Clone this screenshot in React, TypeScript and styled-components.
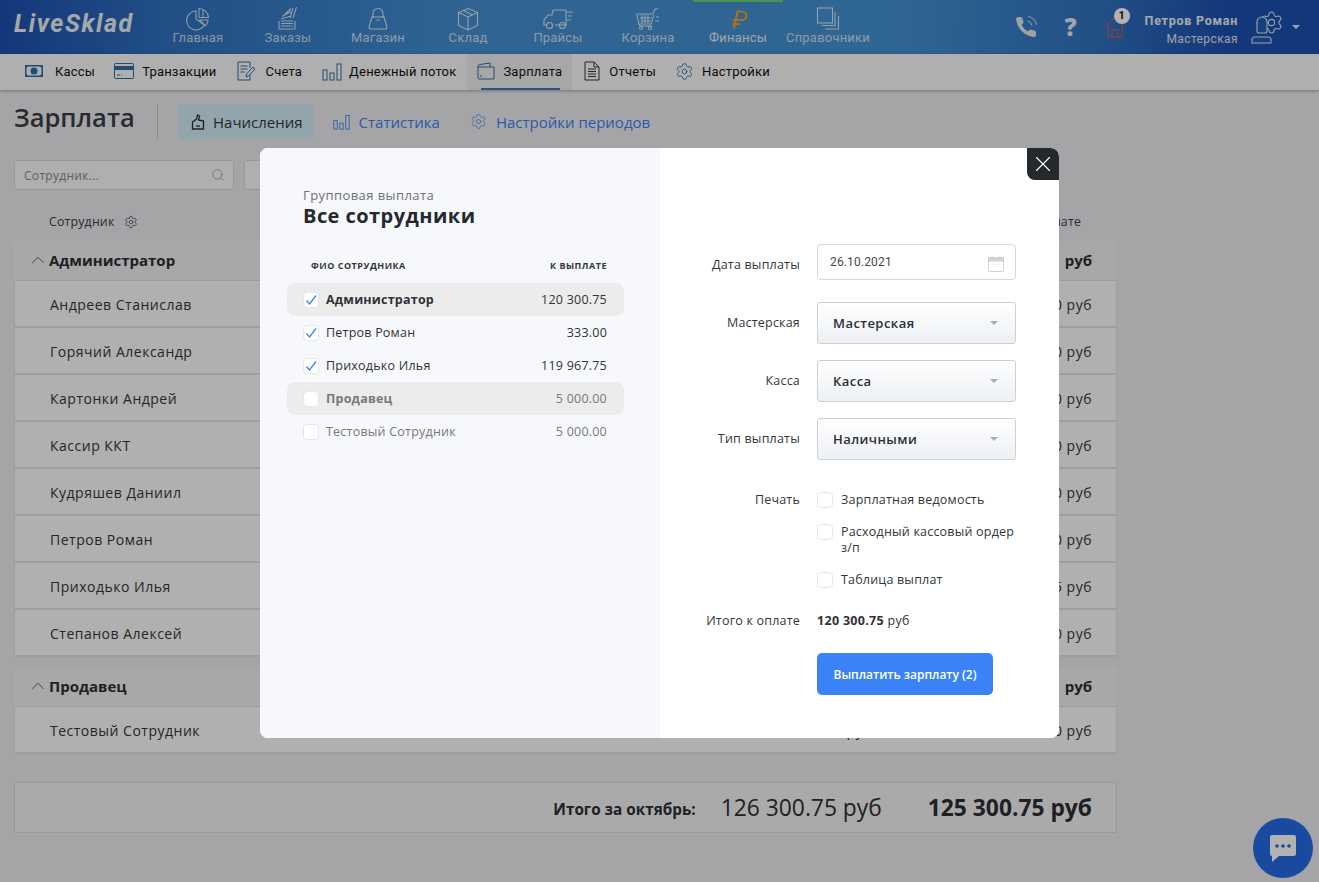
import styled, { createGlobalStyle } from 'styled-components';
import { ChevronUp, Search, Settings, X } from 'lucide-react';

const GlobalStyle = createGlobalStyle`
  html, body {
    margin: 0;
    height: 100%;
    overflow: hidden;
    background: #ecedf0;
    font-family: "Open Sans", "Liberation Sans", sans-serif;
    color: #2b2f33;
  }
  * { box-sizing: border-box; }
`;

const Page = styled.div`
  position: relative;
  width: 1319px;
  height: 882px;
  overflow: hidden;
`;

/* top bar */
const Header = styled.header`
  height: 54px;
  display: flex;
  align-items: stretch;
  background: linear-gradient(92deg, #1c50b0 0%, #2f70bf 12%, #4490d2 35%, #4592d2 68%, #2f70bf 84%, #1c50b0 93%);
`;

const Logo = styled.div`
  width: 153px;
  padding: 9px 0 0 14px;
  font-family: Roboto, sans-serif;
  font-style: italic;
  font-weight: 700;
  font-size: 25px;
  letter-spacing: 1.55px;
  color: #eef0f2;
`;

const MainNav = styled.nav`
  display: flex;
`;

const NavItem = styled.div<{ $active?: boolean }>`
  position: relative;
  width: 90px;
  display: flex;
  flex-direction: column;
  align-items: center;
  padding-top: 7px;
  font-family: Roboto, sans-serif;
  font-size: 13px;
  letter-spacing: 0.2px;
  color: ${(p) => (p.$active ? '#e6edf3' : 'rgba(255,255,255,0.72)')};

  svg {
    height: 24px;
    margin-bottom: -1px;
    color: rgba(255, 255, 255, 0.78);
  }

  &::before {
    content: '';
    display: ${(p) => (p.$active ? 'block' : 'none')};
    position: absolute;
    top: 0;
    left: 0;
    width: 100%;
    height: 2px;
    background: #6fce7a;
  }
`;

const HeaderRight = styled.div`
  margin-left: auto;
  display: flex;
  align-items: center;
  padding-right: 19px;
  color: #e3e7ec;
`;

const IconSlot = styled.div<{ $w: number }>`
  position: relative;
  width: ${(p) => p.$w}px;
  display: flex;
  justify-content: center;
`;

const Question = styled.span`
  font-family: "Open Sans", sans-serif;
  font-weight: 800;
  font-size: 24px;
  line-height: 26px;
  color: #e9ecef;
`;

const Badge = styled.span`
  position: absolute;
  top: -8px;
  left: 18px;
  width: 16px;
  height: 16px;
  border-radius: 50%;
  background: #fff;
  color: #111;
  font-family: Roboto, sans-serif;
  font-weight: 700;
  font-size: 11px;
  line-height: 16px;
  text-align: center;
`;

const UserInfo = styled.div`
  margin: 0 12px 0 10px;
  padding-top: 5px;
  text-align: right;
  font-family: Roboto, sans-serif;
  line-height: 18px;
`;

const UserName = styled.div`
  font-weight: 700;
  font-size: 12.5px;
  letter-spacing: 0.75px;
  color: #f0f2f5;
`;

const UserPlace = styled.div`
  font-size: 12px;
  letter-spacing: 0.4px;
  color: #e0e6ec;
`;

const Caret = styled.span`
  margin-left: 8px;
  width: 0;
  height: 0;
  border-left: 4px solid transparent;
  border-right: 4px solid transparent;
  border-top: 4px solid #e9ecef;
`;

/* second bar */
const SubNav = styled.nav`
  height: 36px;
  display: flex;
  padding-left: 15px;
  background: #fbfbfb;
  box-shadow: 0 1px 3px rgba(0, 0, 0, 0.3);
`;

const SubItem = styled.div<{ $active?: boolean; $gap?: number; $pr?: number }>`
  position: relative;
  display: flex;
  align-items: center;
  gap: ${(p) => p.$gap ?? 9}px;
  padding: 0 ${(p) => p.$pr ?? 10}px 2px 10px;
  margin: ${(p) => (p.$active ? '0 2px 0 1px' : '0')};
  background: ${(p) => (p.$active ? '#f0f0f0' : 'transparent')};
  font-family: Roboto, sans-serif;
  font-size: 13px;
  letter-spacing: 0.2px;
  color: #111;

  svg {
    color: #2f6ea8;
    flex: none;
  }

  &::after {
    content: '';
    display: ${(p) => (p.$active ? 'block' : 'none')};
    position: absolute;
    left: 14px;
    right: 12px;
    bottom: 0;
    height: 2px;
    background: #3a7dba;
  }
`;

/* page body */
const Main = styled.main`
  padding: 14px 202px 0 14px;
`;

const TitleRow = styled.div`
  display: flex;
  align-items: center;
  height: 35px;
`;

const Title = styled.h1`
  margin: 0;
  width: 144px;
  height: 35px;
  font-size: 25.5px;
  line-height: 27px;
  font-weight: 600;
  color: #3a3e42;
  border-right: 1px solid #c5c5c8;
`;

const PageTab = styled.div<{ $active?: boolean }>`
  height: 35px;
  margin-left: ${(p) => (p.$active ? '20px' : '0')};
  margin-right: ${(p) => (p.$active ? '6px' : '2px')};
  display: flex;
  align-items: center;
  gap: ${(p) => (p.$active ? '8px' : '9px')};
  padding: ${(p) => (p.$active ? '0 10px 0 13px' : '0 14px')};
  border-radius: 3px;
  font-size: 15px;
  background: ${(p) => (p.$active ? '#d1ecf7' : 'transparent')};
  color: ${(p) => (p.$active ? '#33383c' : '#3b82f6')};
`;

const Filters = styled.div`
  display: flex;
  gap: 10px;
  margin-top: 21px;
`;

const FilterBox = styled.div`
  width: 220px;
  height: 30px;
  padding: 0 8px 0 9px;
  display: flex;
  align-items: center;
  justify-content: space-between;
  background: #fbfbfb;
  border: 1px solid #d8d8d8;
  border-radius: 3px;
  font-size: 12px;
  letter-spacing: 0.3px;
  color: #8a8a8a;
`;

const ColumnHead = styled.div`
  height: 51px;
  padding: 0 36px 11px 35px;
  display: flex;
  align-items: flex-end;
  justify-content: space-between;
  font-size: 12.3px;
  letter-spacing: 0.2px;
  color: #3a3e42;
`;

const ColumnName = styled.span`
  display: flex;
  align-items: center;
  gap: 10px;
`;

const GroupHead = styled.div<{ $spaced?: boolean }>`
  height: 40px;
  margin-top: ${(p) => (p.$spaced ? '10px' : '0')};
  padding: 0 25px 2px 13px;
  display: flex;
  align-items: center;
  justify-content: space-between;
  background: #f1f1f1;
  border-bottom: 1px solid #e0e0e0;
  font-size: 15px;
  font-weight: 700;
  color: #2b2f33;
`;

const GroupName = styled.span`
  display: flex;
  align-items: center;
`;

const GroupSum = styled.span`
  word-spacing: 6px;
`;

const Row = styled.div`
  height: 47px;
  padding: 2px 24px 0 35px;
  display: grid;
  grid-template-columns: 1fr 200px 220px;
  align-items: center;
  background: #fcfcfc;
  border: 1px solid #e2e2e2;
  border-width: 0 1px 2px 1px;
  font-size: 14px;
  letter-spacing: 0.5px;
  color: #33373b;
`;

const Amount = styled.span`
  text-align: right;
`;

const TotalBar = styled.div`
  height: 51px;
  margin-top: 28px;
  padding: 0 24px 0 0;
  display: flex;
  align-items: center;
  justify-content: flex-end;
  background: #f4f4f4;
  border: 1px solid #dcdcdc;
  color: #2b2f33;
`;

const TotalLabel = styled.span`
  margin-right: 25px;
  padding-top: 3px;
  font-size: 15.3px;
  font-weight: 700;
`;

const TotalValue = styled.span<{ $bold?: boolean }>`
  margin-left: ${(p) => (p.$bold ? '46px' : '0')};
  font-size: 22.8px;
  font-weight: ${(p) => (p.$bold ? 700 : 400)};
`;

const ChatButton = styled.div`
  position: absolute;
  right: 6px;
  bottom: 4px;
  width: 60px;
  height: 60px;
  border-radius: 50%;
  background: #256ae6;
  display: flex;
  align-items: center;
  justify-content: center;
`;

/* modal */
const Overlay = styled.div`
  position: absolute;
  inset: 0;
  padding-top: 148px;
  display: flex;
  justify-content: center;
  align-items: flex-start;
  background: rgba(0, 0, 0, 0.3);
`;

const Modal = styled.div`
  position: relative;
  width: 799px;
  height: 590px;
  display: flex;
  border-radius: 8px;
  overflow: hidden;
  background: #fff;
`;

const CloseButton = styled.div`
  position: absolute;
  top: 0;
  right: 0;
  width: 32px;
  height: 32px;
  display: flex;
  align-items: center;
  justify-content: center;
  background: #24292d;
  border-radius: 0 8px 0 8px;
  color: #fff;
`;

const LeftPane = styled.section`
  width: 400px;
  padding: 39px 36px 0 27px;
  background: #f7f8fb;
`;

const Eyebrow = styled.div`
  margin-left: 16px;
  font-size: 13px;
  line-height: 16px;
  letter-spacing: 0.42px;
  color: #6d7175;
`;

const ModalTitle = styled.h2`
  margin: 0 0 0 16px;
  font-size: 20px;
  line-height: 26px;
  font-weight: 700;
  letter-spacing: 0.45px;
  color: #24292d;
`;

const ListHead = styled.div`
  margin: 29px 0 9px;
  padding: 0 17px 0 24px;
  display: flex;
  justify-content: space-between;
  font-size: 9px;
  line-height: 16px;
  font-weight: 700;
  letter-spacing: 0.5px;
  color: #33373b;
`;

const ListRow = styled.div<{ $group?: boolean; $muted?: boolean }>`
  height: 33px;
  padding: 0 17px 0 16px;
  display: flex;
  align-items: center;
  gap: 7px;
  border-radius: 8px;
  font-size: 12.5px;
  letter-spacing: 0.22px;
  font-weight: ${(p) => (p.$group ? 700 : 400)};
  background: ${(p) => (p.$group ? '#ececec' : 'transparent')};
  color: ${(p) => (p.$muted ? '#77797c' : '#2f3337')};
`;

const ListAmount = styled.span`
  margin-left: auto;
  font-weight: 400;
`;

const Check = styled.span`
  flex: none;
  width: 16px;
  height: 16px;
  display: flex;
  align-items: center;
  justify-content: center;
  background: #fff;
  border: 1px solid #e4e6e9;
  border-radius: 4px;
`;

const RightPane = styled.section`
  flex: 1;
  padding: 96px 0 0 0;
  display: grid;
  grid-template-columns: 140px 199px;
  column-gap: 17px;
  grid-auto-rows: min-content;
  align-items: center;
`;

const Label = styled.label`
  text-align: right;
  font-size: 12.5px;
  line-height: 16px;
  letter-spacing: 0.2px;
  color: #33373b;
`;

const DateField = styled.div`
  height: 36px;
  padding: 0 11px 1px 12px;
  display: flex;
  align-items: center;
  justify-content: space-between;
  border: 1px solid #d5d7da;
  border-radius: 4px;
  font-family: Roboto, sans-serif;
  font-size: 12px;
  letter-spacing: 0.15px;
  color: #454a50;

  svg {
    margin-top: 5px;
  }
`;

const DateLabelCell = styled(Label)`
  padding-top: 6px;
`;

const Select = styled.div`
  height: 42px;
  margin-top: 16px;
  padding: 0 17px 0 15px;
  display: flex;
  align-items: center;
  justify-content: space-between;
  background: linear-gradient(#ffffff, #edf0f4);
  border: 1px solid #ced0d3;
  border-radius: 3px;
  font-size: 13px;
  font-weight: 600;
  letter-spacing: 0.45px;
  color: #2b2f33;

  &::after {
    content: '';
    border-left: 4px solid transparent;
    border-right: 4px solid transparent;
    border-top: 4px solid #a9adb1;
  }
`;

const SelectFirst = styled(Select)`
  margin-top: 22px;
`;

const SelectLabel = styled(Label)<{ $first?: boolean }>`
  margin-top: ${(p) => (p.$first ? '22px' : '16px')};
`;

const PrintLabel = styled(Label)`
  align-self: start;
  margin-top: 32px;
`;

const PrintList = styled.div`
  margin-top: 32px;
  display: flex;
  flex-direction: column;
  gap: 16px;
`;

const PrintItem = styled.div`
  display: flex;
  gap: 8px;
  font-size: 12.5px;
  line-height: 16px;
  letter-spacing: 0.2px;
  color: #33373b;
`;

const PayLabel = styled(Label)`
  margin-top: 25px;
`;

const PayValue = styled.div`
  margin-top: 25px;
  font-size: 12.5px;
  line-height: 16px;
  letter-spacing: 0.3px;
  color: #2f3337;

  b {
    font-weight: 700;
  }
`;

const PayButton = styled.button`
  grid-column: 2;
  width: 176px;
  height: 42px;
  margin-top: 24px;
  border: none;
  border-radius: 5px;
  background: #3b82f6;
  color: #fff;
  font-family: "Open Sans", sans-serif;
  font-size: 12px;
  font-weight: 600;
`;

const ico = { fill: 'none', stroke: 'currentColor', strokeWidth: 1.1 };

const PieIcon = () => (
  <svg width="24" height="24" viewBox="0 0 24 24" {...ico}>
    <path d="M10 4a9.500 9.500 0 1 0 8.500 14L10 12z" />
    <path d="M13 1.500v9h9.500a9.500 9.500 0 0 0-9.500-9z" />
    <path d="M14 13h8a10 10 0 0 1-2.500 6z" />
    <path d="M17 3l0 7" />
  </svg>
);

const OrdersIcon = () => (
  <svg width="24" height="24" viewBox="0 0 24 24" {...ico}>
    <path d="M3 14v8h16v-8" />
    <path d="M5 14h12M5 16.500h12M5 19h12" />
    <path d="M5 12l10-3M6 9.500l9-5M9 7l6-5.500M14 11l3-10M17 11l3.500-11" />
  </svg>
);

const BagIcon = () => (
  <svg width="24" height="24" viewBox="0 0 24 24" {...ico}>
    <path d="M6 10h12l3 10a2 2 0 0 1-2 2H5a2 2 0 0 1-2-2z" />
    <path d="M7 11V6.500a5 5 0 0 1 10 0V11" />
    <path d="M10.500 13h3" />
  </svg>
);

const BoxIcon = () => (
  <svg width="24" height="24" viewBox="0 0 24 24" {...ico}>
    <path d="M12 1.500l9.500 4v13L12 23l-9.500-4.500v-13z" />
    <path d="M2.500 5.500L12 10l9.500-4.500M12 10v13M7.500 3.500l9.500 4.500" />
  </svg>
);

const TruckIcon = () => (
  <svg width="32" height="24" viewBox="0 0 32 24" {...ico}>
    <path d="M11 3h13v15H13" />
    <path d="M11 3l-1 5H6l-4 5v5h2" />
    <circle cx="7.500" cy="18.500" r="3" />
    <circle cx="20.500" cy="18.500" r="3" />
    <path d="M24 18h-.5M25 5h6M26 9h4M25 13h4" />
  </svg>
);

const CartIcon = () => (
  <svg width="26" height="24" viewBox="0 0 26 24" {...ico}>
    <path d="M1 7h17l2-5h3" />
    <path d="M2 8l2 9h12l3-9" />
    <path d="M5 11h12M6 14h10M7 8v8M10 8v8M13 8v8" />
    <path d="M4 17l1 2h12" />
    <circle cx="6" cy="21" r="1.500" />
    <circle cx="15" cy="21" r="1.500" />
    <path d="M21 10h3M20 14h4" />
  </svg>
);

const RubleIcon = () => (
  <svg width="24" height="24" viewBox="0 0 24 24" fill="none" stroke="#f0a526" strokeWidth="2.200">
    <path d="M8 21L11.500 4.500H16a4 4 0 0 1 0 8.500H7" />
    <path d="M6.500 17H14" />
  </svg>
);

const StackIcon = () => (
  <svg width="24" height="24" viewBox="0 0 24 24" {...ico}>
    <rect x="1.500" y="1" width="15" height="15" />
    <path d="M19 5.500V18.500H6M22.500 9v13H9.500" />
  </svg>
);

const PhoneIcon = () => (
  <svg width="24" height="24" viewBox="0 0 24 24" fill="currentColor">
    <path d="M22 18.500v1.500a2 2 0 0 1-2.180 2 19.790 19.790 0 0 1-8.630-3.070 19.500 19.500 0 0 1-6-6 19.790 19.790 0 0 1-3.070-8.670A2 2 0 0 1 4.110 2h2.500a2 2 0 0 1 2 1.720c.13.960.36 1.900.7 2.810a2 2 0 0 1-.45 2.110L7.600 9.900a14 14 0 0 0 6.500 6.500l1.270-1.270a2 2 0 0 1 2.110-.45c.91.340 1.850.570 2.810.700A2 2 0 0 1 22 17z" />
    <path d="M13.500 6a5.500 5.500 0 0 1 4.500 4.500M14 1.500a10 10 0 0 1 8.500 8.500" fill="none" stroke="currentColor" strokeWidth="1" />
  </svg>
);

const HouseIcon = () => (
  <svg width="20" height="22" viewBox="0 0 20 22" fill="none" stroke="#e2564a" strokeWidth="1">
    <path d="M0.500 9.500L10 1l9.500 8.500" />
    <path d="M3 8v13h14V8" />
    <path d="M7 21v-7h6v7" />
  </svg>
);

const UserGearIcon = () => (
  <svg width="34" height="34" viewBox="0 0 34 34" fill="none" stroke="currentColor" strokeWidth="1.100">
    <Settings x="9" y="0" width="25" height="25" strokeWidth="1" />
    <circle cx="12" cy="12" r="5" fill="#1f5bb8" />
    <path d="M7 13v8a2 2 0 0 0 2 2h6a2 2 0 0 0 2-2v-8" fill="#1f5bb8" />
    <path d="M6 27h12a3 3 0 0 1 3 3v3H2v-3a3 3 0 0 1 3-3z" fill="#1f5bb8" />
  </svg>
);

const CashIcon = () => (
  <svg width="18" height="12" viewBox="0 0 18 12" fill="currentColor">
    <path fillRule="evenodd" d="M0 0h18v12H0zM3 1.500L1.500 3v6L3 10.500h12L16.500 9V3L15 1.500z" />
    <circle cx="9" cy="6" r="3.500" />
  </svg>
);

const CardIcon = () => (
  <svg width="20" height="16" viewBox="0 0 20 16" fill="none" stroke="currentColor">
    <rect x="0.500" y="0.500" width="19" height="15" rx="1" />
    <path d="M0 3.500h20v3H0z" fill="currentColor" />
    <path d="M3 12h3M7 12h1" />
  </svg>
);

const InvoiceIcon = () => (
  <svg width="20" height="20" viewBox="0 0 20 20" fill="none" stroke="currentColor">
    <path d="M13 14v5H1V1h12v6" />
    <path d="M3.500 5h7M3.500 8h7M3.500 11h4" />
    <path d="M9 16l.5-3L16 6l2 2-6.500 7z" />
  </svg>
);

const BarsIcon = ({ size = 20 }: { size?: number }) => (
  <svg width={size} height={size} viewBox="0 0 20 20" fill="none" stroke="currentColor">
    <rect x="1" y="9" width="4" height="10" />
    <rect x="8" y="12" width="4" height="7" />
    <rect x="15" y="3" width="4" height="16" />
  </svg>
);

const WalletIcon = () => (
  <svg width="18" height="18" viewBox="0 0 18 18" fill="none" stroke="currentColor">
    <path d="M1 5v11a1 1 0 0 0 1 1h15V5z" />
    <path d="M1 5c0-2 1-2.500 2-2.500L13 1v4" />
    <path d="M3 14h2" />
  </svg>
);

const ReportIcon = () => (
  <svg width="16" height="20" viewBox="0 0 16 20" fill="none" stroke="#33373b">
    <path d="M1 1h9l5 5v13H1z" />
    <path d="M10 1v5h5M4 8h8M4 10.500h8M4 13h8M4 15.500h8" />
  </svg>
);

const HandIcon = () => (
  <svg width="14" height="16" viewBox="0 0 14 16" fill="none" stroke="#2b2f33" strokeWidth="1.300">
    <path d="M1.500 15V8l4-3 1-4 2 1-1 4 5 1v8z" />
    <path d="M5 12h4" />
  </svg>
);

const CalendarIcon = () => (
  <svg width="16" height="16" viewBox="0 0 16 16" fill="none" stroke="#cfd2d5">
    <rect x="0.500" y="1.500" width="15" height="14" rx="1" />
    <path d="M0 1.500h16V5H0z" fill="#cfd2d5" />
    <path d="M4 0v2M12 0v2M4.500 8h1M7.500 8h1M10.500 8h1" />
  </svg>
);

const ChatIcon = () => (
  <svg width="32" height="32" viewBox="0 0 32 32">
    <path d="M5 3h22a2 2 0 0 1 2 2v17a2 2 0 0 1-2 2H12l-7 6v-6a2 2 0 0 1-2-2V5a2 2 0 0 1 2-2z" fill="#fff" />
    <circle cx="10" cy="14" r="1.800" fill="#256ae6" />
    <circle cx="16" cy="14" r="1.800" fill="#256ae6" />
    <circle cx="22" cy="14" r="1.800" fill="#256ae6" />
  </svg>
);

const CheckMark = () => (
  <svg width="12" height="12" viewBox="0 0 12 12" fill="none" stroke="#3b82f6" strokeWidth="1.300">
    <path d="M1.500 6.500L4.500 10 11 1.500" />
  </svg>
);

const navItems = [
  { label: 'Главная', icon: <PieIcon /> },
  { label: 'Заказы', icon: <OrdersIcon /> },
  { label: 'Магазин', icon: <BagIcon /> },
  { label: 'Склад', icon: <BoxIcon /> },
  { label: 'Прайсы', icon: <TruckIcon /> },
  { label: 'Корзина', icon: <CartIcon /> },
  { label: 'Финансы', icon: <RubleIcon />, active: true },
  { label: 'Справочники', icon: <StackIcon /> },
];

const subItems = [
  { label: 'Кассы', icon: <CashIcon />, gap: 12, pr: 9 },
  { label: 'Транзакции', icon: <CardIcon />, gap: 8 },
  { label: 'Счета', icon: <InvoiceIcon /> },
  { label: 'Денежный поток', icon: <BarsIcon />, gap: 7 },
  { label: 'Зарплата', icon: <WalletIcon />, active: true, gap: 8 },
  { label: 'Отчеты', icon: <ReportIcon />, pr: 9 },
  { label: 'Настройки', icon: <Settings size={19} strokeWidth={1.1} />, gap: 8 },
];

const admins = [
  ['Андреев Станислав', '', '0.00 руб'],
  ['Горячий Александр', '', '0.00 руб'],
  ['Картонки Андрей', '', '0.00 руб'],
  ['Кассир ККТ', '', '0.00 руб'],
  ['Кудряшев Даниил', '', '0.00 руб'],
  ['Петров Роман', '', '333.00 руб'],
  ['Приходько Илья', '', '119 967.75 руб'],
  ['Степанов Алексей', '', '0.00 руб'],
];

const payees = [
  { name: 'Администратор', sum: '120 300.75', group: true, on: true },
  { name: 'Петров Роман', sum: '333.00', on: true },
  { name: 'Приходько Илья', sum: '119 967.75', on: true },
  { name: 'Продавец', sum: '5 000.00', group: true },
  { name: 'Тестовый Сотрудник', sum: '5 000.00' },
];

const EmployeeRow = ({ cells }: { cells: string[] }) => (
  <Row>
    <span>{cells[0]}</span>
    <Amount>{cells[1]}</Amount>
    <Amount>{cells[2]}</Amount>
  </Row>
);

export default function App() {
  return (
    <Page>
      <GlobalStyle />
      <Header>
        <Logo>LiveSklad</Logo>
        <MainNav>
          {navItems.map((item) => (
            <NavItem key={item.label} $active={item.active}>
              {item.icon}
              {item.label}
            </NavItem>
          ))}
        </MainNav>
        <HeaderRight>
          <IconSlot $w={40}>
            <PhoneIcon />
          </IconSlot>
          <IconSlot $w={50}>
            <Question>?</Question>
          </IconSlot>
          <IconSlot $w={39}>
            <HouseIcon />
            <Badge>1</Badge>
          </IconSlot>
          <UserInfo>
            <UserName>Петров Роман</UserName>
            <UserPlace>Мастерская</UserPlace>
          </UserInfo>
          <UserGearIcon />
          <Caret />
        </HeaderRight>
      </Header>

      <SubNav>
        {subItems.map((item) => (
          <SubItem key={item.label} $active={item.active} $gap={item.gap} $pr={item.pr}>
            {item.icon}
            {item.label}
          </SubItem>
        ))}
      </SubNav>

      <Main>
        <TitleRow>
          <Title>Зарплата</Title>
          <PageTab $active>
            <HandIcon />
            Начисления
          </PageTab>
          <PageTab>
            <BarsIcon size={17} />
            Статистика
          </PageTab>
          <PageTab>
            <Settings size={17} strokeWidth={1} />
            Настройки периодов
          </PageTab>
        </TitleRow>

        <Filters>
          <FilterBox>
            Сотрудник...
            <Search size={14} strokeWidth={1.2} />
          </FilterBox>
          <FilterBox />
        </Filters>

        <ColumnHead>
          <ColumnName>
            Сотрудник
            <Settings size={14} strokeWidth={1.2} />
          </ColumnName>
          <span>К оплате</span>
        </ColumnHead>

        <GroupHead>
          <GroupName>
            <ChevronUp size={22} strokeWidth={0.8} />
            Администратор
          </GroupName>
          <GroupSum>120 300.75 руб</GroupSum>
        </GroupHead>
        {admins.map((cells) => (
          <EmployeeRow key={cells[0]} cells={cells} />
        ))}

        <GroupHead $spaced>
          <GroupName>
            <ChevronUp size={22} strokeWidth={0.8} />
            Продавец
          </GroupName>
          <GroupSum>5 000.00 руб</GroupSum>
        </GroupHead>
        <EmployeeRow cells={['Тестовый Сотрудник', '6 000.00 руб', '5 000.00 руб']} />

        <TotalBar>
          <TotalLabel>Итого за октябрь:</TotalLabel>
          <TotalValue>126 300.75 руб</TotalValue>
          <TotalValue $bold>125 300.75 руб</TotalValue>
        </TotalBar>
      </Main>

      <ChatButton>
        <ChatIcon />
      </ChatButton>

      <Overlay>
        <Modal>
          <CloseButton>
            <X size={26} strokeWidth={1} />
          </CloseButton>
          <LeftPane>
            <Eyebrow>Групповая выплата</Eyebrow>
            <ModalTitle>Все сотрудники</ModalTitle>
            <ListHead>
              <span>ФИО СОТРУДНИКА</span>
              <span>К ВЫПЛАТЕ</span>
            </ListHead>
            {payees.map((p) => (
              <ListRow key={p.name} $group={p.group} $muted={!p.on}>
                <Check>{p.on && <CheckMark />}</Check>
                {p.name}
                <ListAmount>{p.sum}</ListAmount>
              </ListRow>
            ))}
          </LeftPane>
          <RightPane>
            <DateLabelCell>Дата выплаты</DateLabelCell>
            <DateField>
              26.10.2021
              <CalendarIcon />
            </DateField>
            <SelectLabel $first>Мастерская</SelectLabel>
            <SelectFirst>Мастерская</SelectFirst>
            <SelectLabel>Касса</SelectLabel>
            <Select>Касса</Select>
            <SelectLabel>Тип выплаты</SelectLabel>
            <Select>Наличными</Select>
            <PrintLabel>Печать</PrintLabel>
            <PrintList>
              <PrintItem>
                <Check />
                Зарплатная ведомость
              </PrintItem>
              <PrintItem>
                <Check />
                Расходный кассовый ордер з/п
              </PrintItem>
              <PrintItem>
                <Check />
                Таблица выплат
              </PrintItem>
            </PrintList>
            <PayLabel>Итого к оплате</PayLabel>
            <PayValue>
              <b>120 300.75</b> руб
            </PayValue>
            <PayButton>Выплатить зарплату (2)</PayButton>
          </RightPane>
        </Modal>
      </Overlay>
    </Page>
  );
}
